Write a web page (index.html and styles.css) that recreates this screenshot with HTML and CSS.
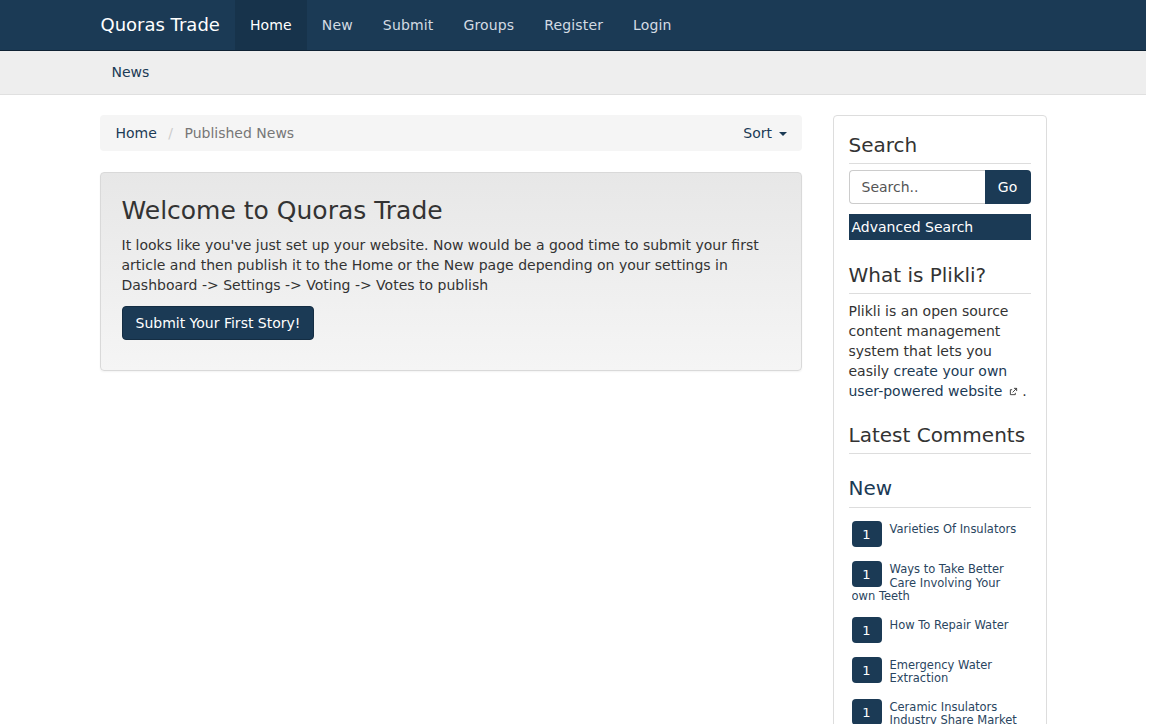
FILE: index.html
```html
<!DOCTYPE html>
<html lang="en">

<head>
  <meta charset="UTF-8">
  <title>Quoras Trade</title>
  <link rel="stylesheet" href="styles.css">
</head>

<body>
  <div class="page">
    <nav class="navbar">
      <div class="container navbar-inner">
        <a class="brand" href="#">Quoras Trade</a>
        <ul class="nav">
          <li class="active"><a href="#">Home</a></li>
          <li><a href="#">New</a></li>
          <li><a href="#">Submit</a></li>
          <li><a href="#">Groups</a></li>
          <li><a href="#">Register</a></li>
          <li><a href="#">Login</a></li>
        </ul>
      </div>
    </nav>

    <div class="subnav">
      <div class="container">
        <a class="subnav-link" href="#">News</a>
      </div>
    </div>

    <div class="container main-row">
      <div class="col-main">
        <div class="breadcrumb">
          <div class="crumbs">
            <a href="#">Home</a>
            <span class="divider">/</span>
            <span class="current">Published News</span>
          </div>
          <a class="sort" href="#">Sort <span class="caret"></span></a>
        </div>

        <div class="jumbotron">
          <h1>Welcome to Quoras Trade</h1>
          <p>It looks like you've just set up your website. Now would be a good time to submit your first article and then publish it to the Home or the New page depending on your settings in Dashboard -&gt; Settings -&gt; Voting -&gt; Votes to publish</p>
          <a class="btn" href="#">Submit Your First Story!</a>
        </div>
      </div>

      <aside class="col-side">
        <div class="panel">
          <h3 class="side-title">Search</h3>
          <form class="search-form">
            <input type="text" placeholder="Search..">
            <button type="button">Go</button>
          </form>
          <a class="adv-search" href="#">Advanced Search</a>

          <h3 class="side-title">What is Plikli?</h3>
          <p class="about">Plikli is an open source content management system that lets you easily <a href="#">create your own user-powered website</a>
            <svg class="ext" width="9" height="9" viewBox="0 0 10 10"><path d="M5.5 1.5h3v3M8.5 1.5L4 6M7 6.5v2h-5.5v-5.5h2" fill="none" stroke="#333" stroke-width="1"/></svg> .</p>

          <h3 class="side-title">Latest Comments</h3>

          <h3 class="side-title blue">New</h3>
          <ul class="new-list">
            <li><span class="badge">1</span><a href="#">Varieties Of Insulators</a></li>
            <li><span class="badge">1</span><a href="#">Ways to Take Better Care Involving Your own Teeth</a></li>
            <li><span class="badge">1</span><a href="#">How To Repair Water</a></li>
            <li><span class="badge">1</span><a href="#">Emergency Water Extraction</a></li>
            <li><span class="badge">1</span><a href="#">Ceramic Insulators Industry Share Market</a></li>
          </ul>
        </div>
      </aside>
    </div>
  </div>
</body>

</html>
```

FILE: styles.css
```css
body {
  margin: 0;
  font-family: "DejaVu Sans", sans-serif;
  font-size: 14px;
  line-height: 20px;
  color: #333;
  background: #fff;
  overflow: hidden;
}

a {
  text-decoration: none;
  color: #1b3a55;
}

.page {
  width: 1146px;
}

.container {
  width: 947px;
  margin: 0 auto;
  padding: 0 15px;
  box-sizing: content-box;
}

.navbar {
  background-color: #1b3a55;
  border-bottom: 1px solid #0f2233;
  height: 50px;
}

.navbar-inner {
  display: flex;
  align-items: stretch;
  height: 50px;
}

.brand {
  color: #fff;
  font-size: 18px;
  line-height: 50px;
  padding-left: 1px;
  padding-right: 15px;
}

.nav {
  display: flex;
  list-style: none;
  margin: 0;
  padding: 0;
}

.nav li a {
  display: block;
  padding: 0 15px;
  line-height: 50px;
  letter-spacing: 0.15px;
  color: #d3dbe3;
}

.nav li.active a {
  background-color: #17334b;
  color: #fff;
}

.subnav {
  background-color: #eeeeee;
  border-bottom: 1px solid #e0e0e0;
  height: 43px;
}

.subnav-link {
  display: inline-block;
  padding: 0 12px;
  line-height: 43px;
  color: #1b3a55;
}

.main-row {
  display: flex;
  gap: 31px;
  padding-top: 20px;
}

.col-main {
  width: 702px;
}

.col-side {
  width: 214px;
}

.breadcrumb {
  display: flex;
  justify-content: space-between;
  align-items: center;
  background-color: #f5f5f5;
  border-radius: 4px;
  height: 36px;
  padding: 0 15px 0 16px;
  margin-bottom: 21px;
}

.crumbs .divider {
  color: #ccc;
  padding: 0 7px;
}

.crumbs .current {
  color: #777;
}

.sort {
  color: #1b3a55;
}

.caret {
  display: inline-block;
  width: 0;
  height: 0;
  margin-left: 2px;
  vertical-align: middle;
  border-top: 4px solid #1b3a55;
  border-left: 4px solid transparent;
  border-right: 4px solid transparent;
}

.jumbotron {
  background: linear-gradient(to bottom, #e7e7e7, #f5f5f5);
  border: 1px solid #d9d9d9;
  border-radius: 4px;
  box-shadow: 0 1px 2px rgba(0, 0, 0, 0.05);
  padding: 22px 20px 30px 21px;
}

.jumbotron h1 {
  margin: 0 0 8px;
  font-size: 25px;
  font-weight: normal;
  line-height: 32px;
}

.jumbotron p {
  margin: 0 0 11px;
  line-height: 20px;
}

.btn {
  display: inline-block;
  background-color: #1b3a55;
  color: #fff;
  padding: 6px 13px;
  border-radius: 4px;
  border: 1px solid #142d43;
  line-height: 20px;
}

.panel {
  border: 1px solid #ddd;
  border-radius: 4px;
  padding: 14px 15px 20px;
  min-height: 640px;
}

.side-title {
  margin: 4px 0 0;
  padding-bottom: 7px;
  border-bottom: 1px solid #ddd;
  font-size: 20px;
  font-weight: normal;
  line-height: 22px;
  color: #333;
}

.side-title.blue {
  color: #1b3a55;
  margin-top: 23px;
  padding-bottom: 8px;
}

.search-form {
  display: flex;
  margin: 6px 0 10px;
}

.search-form input {
  width: 136px;
  height: 34px;
  box-sizing: border-box;
  border: 1px solid #ccc;
  border-right: none;
  border-radius: 4px 0 0 4px;
  padding: 0 12px;
  font-family: "DejaVu Sans", sans-serif;
  font-size: 14px;
  color: #555;
}

.search-form input::placeholder {
  color: #555;
}

.search-form button {
  flex: 1;
  height: 34px;
  border: none;
  border-radius: 0 4px 4px 0;
  background-color: #1b3a55;
  color: #fff;
  font-family: "DejaVu Sans", sans-serif;
  font-size: 14px;
}

.adv-search {
  display: block;
  background-color: #1b3a55;
  color: #fff;
  padding: 3px 3px;
  line-height: 20px;
  margin-bottom: 24px;
}

.about {
  margin: 7px 0 23px;
  line-height: 20px;
}

.ext {
  margin-left: 2px;
}

.new-list {
  list-style: none;
  margin: 13px 0 0;
  padding: 0 4px 0 3px;
  font-size: 11.5px;
  line-height: 13.5px;
}

.new-list li {
  overflow: hidden;
  padding-top: 2px;
  margin-bottom: 13px;
}

.new-list .badge {
  float: left;
  width: 30px;
  height: 26px;
  line-height: 28px;
  margin: -2px 8px 1px 0;
  background-color: #1b3a55;
  color: #fff;
  border-radius: 4px;
  text-align: center;
  font-size: 13px;
}

.new-list a {
  color: #2a4560;
}
```
